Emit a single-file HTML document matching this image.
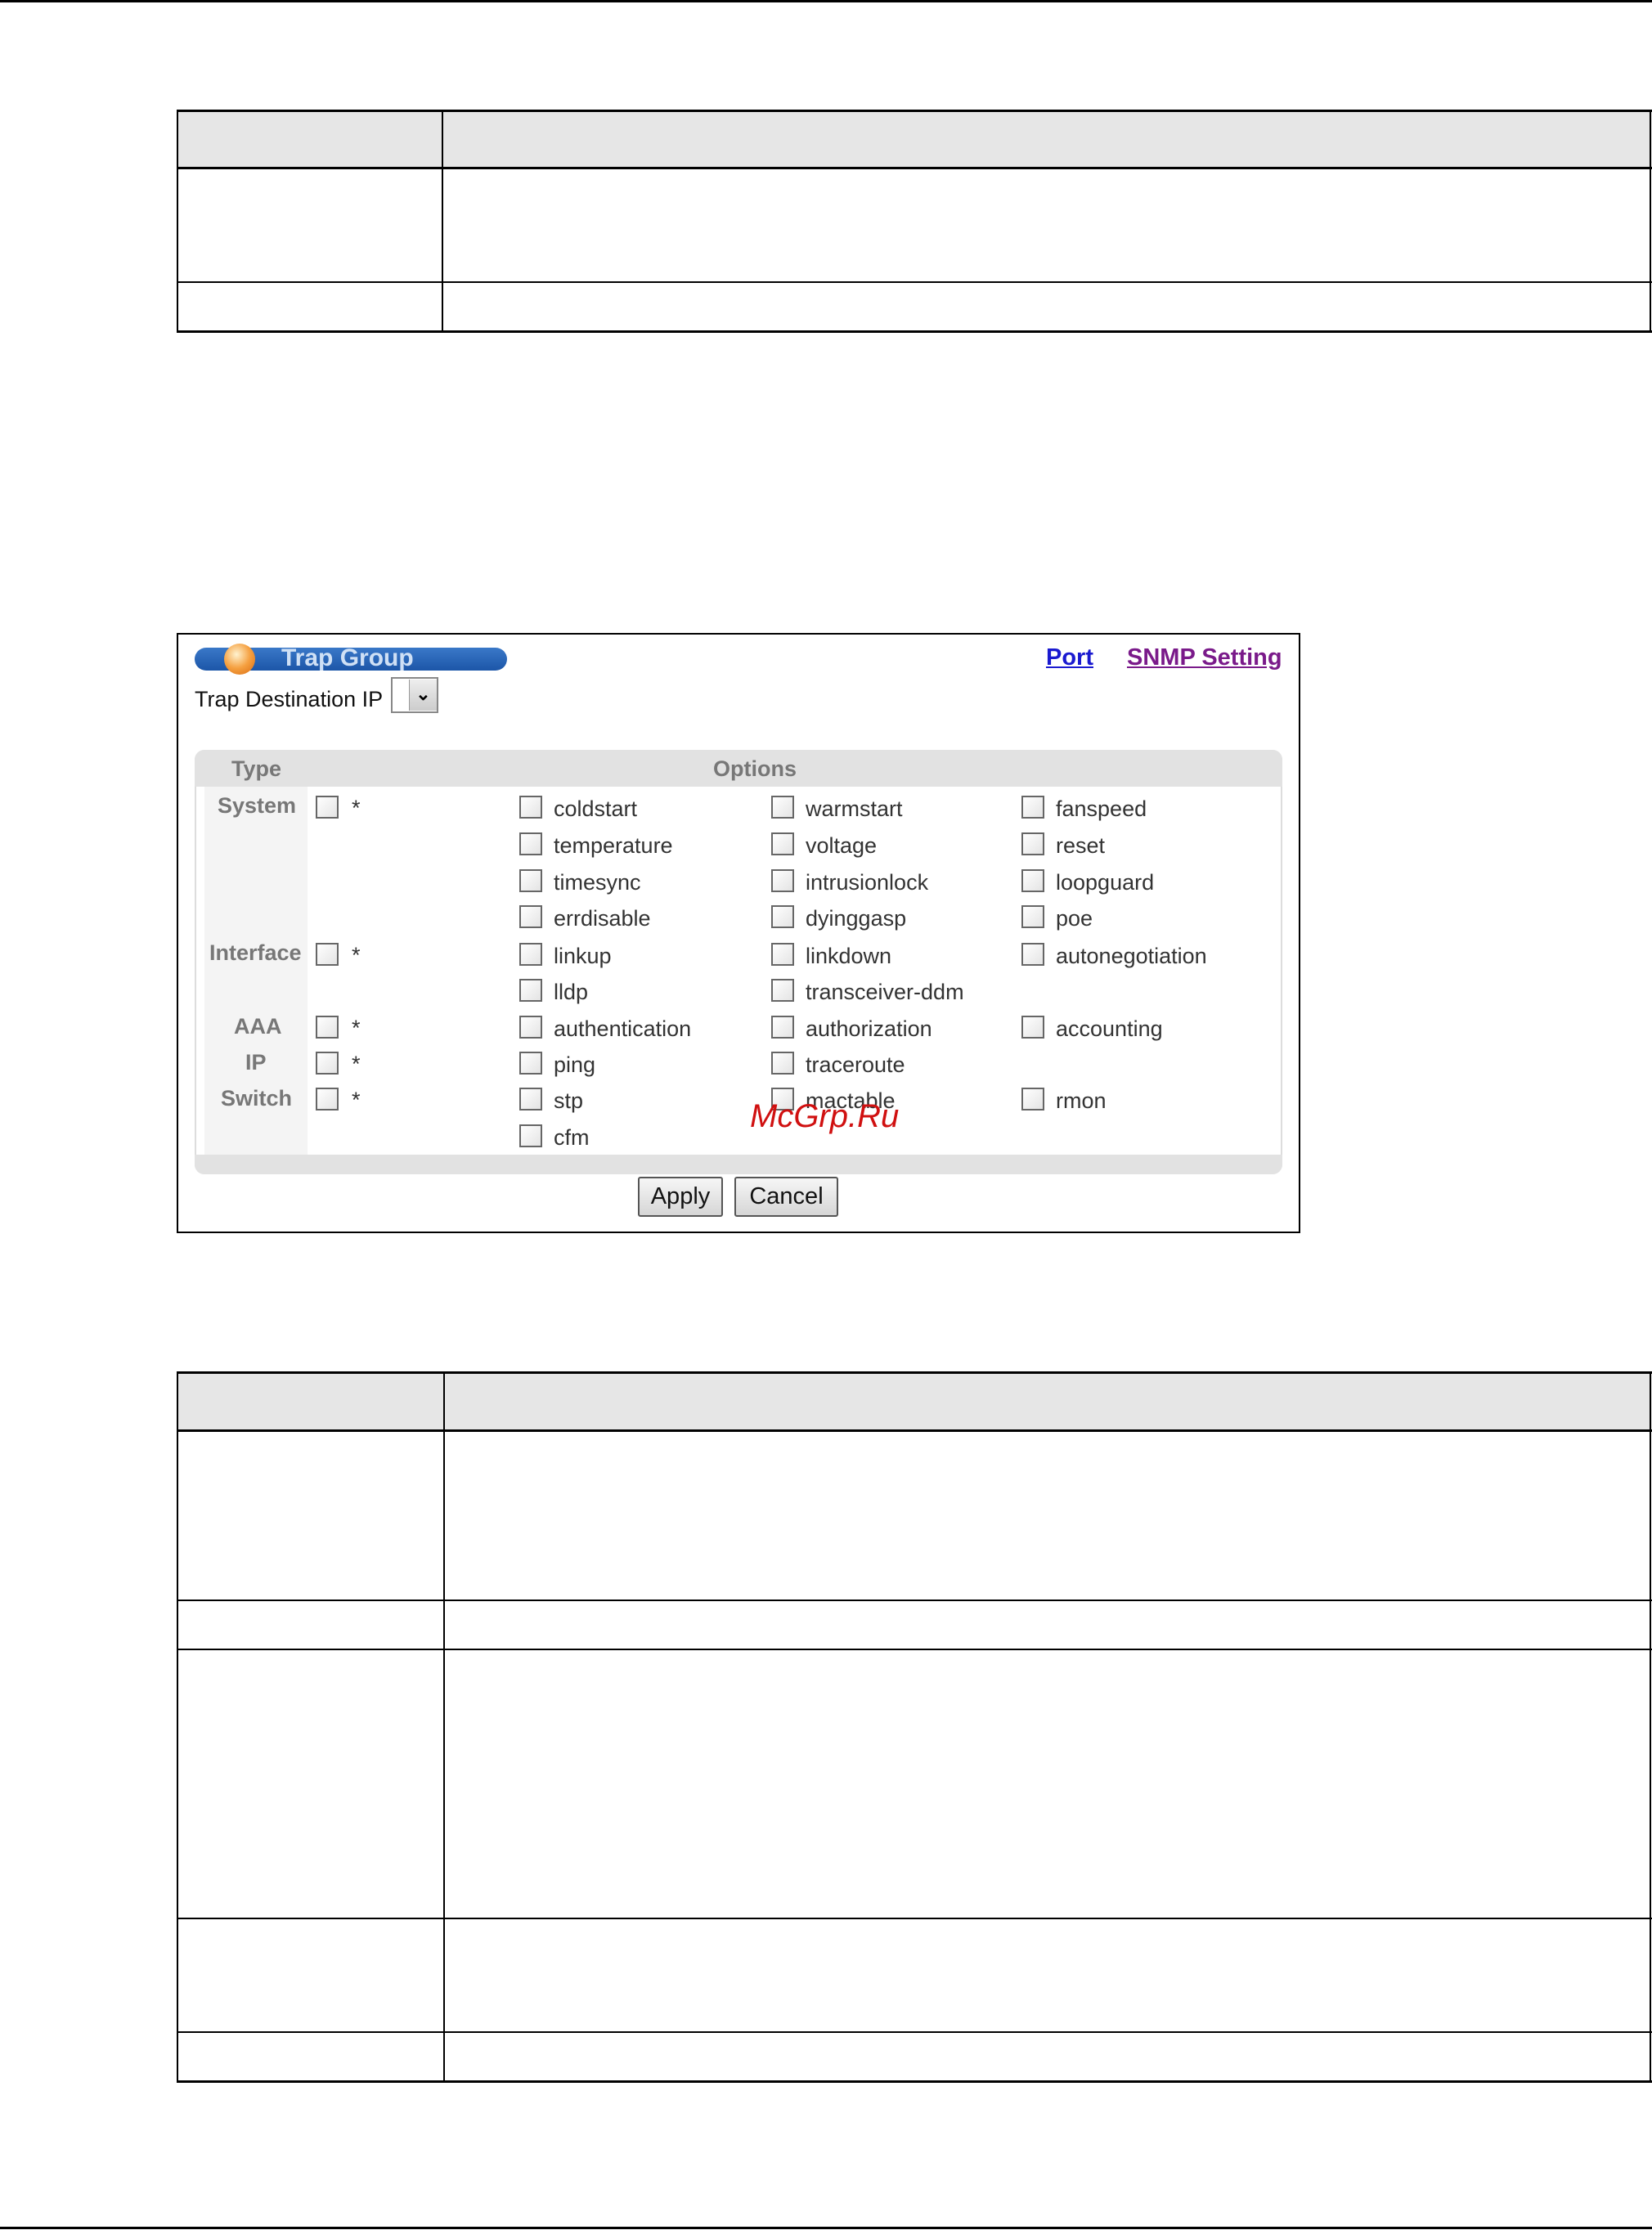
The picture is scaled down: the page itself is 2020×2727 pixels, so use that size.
<!DOCTYPE html>
<html><head><meta charset="utf-8"><style>
*{margin:0;padding:0;box-sizing:border-box}
body{width:2020px;height:2727px;background:#fff;position:relative;overflow:hidden;font-family:"Liberation Sans",Arial,sans-serif}
.a{position:absolute}
.hl{position:absolute;background:#000}
.t{position:absolute;font-size:27px;color:#333;white-space:nowrap;line-height:30px}
.cb{position:absolute;width:28px;height:28px;border:2px solid #666;background:linear-gradient(135deg,#fff,#e4e4e4)}
.btn{position:absolute;border:2px solid #555;background:linear-gradient(#f6f6f6,#d6d6d6);font-size:29px;color:#111;text-align:center;line-height:44px;border-radius:3px}
</style></head><body>
<div class="hl" style="left:0;top:0;width:2020px;height:3px"></div>
<div class="hl" style="left:0;top:2723px;width:2020px;height:3px"></div>

<!-- table 1 -->
<div class="a" style="left:216px;top:134px;width:1804px;height:71px;background:#e6e6e6"></div>
<div class="hl" style="left:216px;top:134px;width:1804px;height:3px"></div>
<div class="hl" style="left:216px;top:204px;width:1804px;height:3px"></div>
<div class="hl" style="left:216px;top:344px;width:1804px;height:2px"></div>
<div class="hl" style="left:216px;top:404px;width:1804px;height:3px"></div>
<div class="hl" style="left:216px;top:134px;width:2px;height:273px"></div>
<div class="hl" style="left:540px;top:134px;width:2px;height:273px"></div>
<div class="hl" style="left:2017px;top:134px;width:2px;height:273px"></div>

<!-- panel -->
<div class="a" style="left:216px;top:774px;width:1374px;height:734px;border:2px solid #000"></div>
<div class="a" style="left:238px;top:792px;width:382px;height:28px;border-radius:14px;background:linear-gradient(#3a78c8,#1c56a8)"></div>
<div class="a" style="left:274px;top:787px;width:38px;height:38px;border-radius:50%;background:radial-gradient(circle at 40% 35%,#fff3d0,#f5a040 50%,#d86a10)"></div>
<div class="a" style="left:344px;top:788px;font-size:30px;color:#cfe0f5;font-weight:bold;line-height:34px">Trap Group</div>
<div class="a" style="left:1279px;top:788px;font-size:29px;color:#1a1ad0;font-weight:bold;text-decoration:underline">Port</div>
<div class="a" style="left:1378px;top:788px;font-size:29px;color:#7a1a8a;font-weight:bold;text-decoration:underline">SNMP Setting</div>
<div class="t" style="left:238px;top:840px;color:#111">Trap Destination IP</div>
<div class="a" style="left:478px;top:828px;width:58px;height:44px;border:2px solid #888;background:#fff"></div>
<div class="a" style="left:500px;top:831px;width:34px;height:38px;background:linear-gradient(#eee,#ccc);border-left:1px solid #999;font-size:22px;text-align:center;line-height:36px;font-weight:bold">&#8964;</div>

<div class="a" style="left:238px;top:917px;width:1330px;height:519px;background:#fff;border-radius:12px;box-shadow:0 0 0 2px #ddd inset"></div>
<div class="a" style="left:238px;top:917px;width:1330px;height:45px;background:#e2e2e2;border-radius:12px 12px 0 0"></div>
<div class="a" style="left:238px;top:1412px;width:1330px;height:24px;background:#e2e2e2;border-radius:0 0 12px 12px"></div>
<div class="a" style="left:250px;top:962px;width:126px;height:450px;background:#f4f4f4"></div>
<div class="t" style="left:283px;top:925px;color:#777;font-weight:bold">Type</div>
<div class="t" style="left:872px;top:925px;color:#777;font-weight:bold">Options</div>

<div class="t" style="left:266px;top:970px;color:#777;font-weight:bold">System</div>
<div class="t" style="left:256px;top:1150px;color:#777;font-weight:bold">Interface</div>
<div class="t" style="left:286px;top:1240px;color:#777;font-weight:bold">AAA</div>
<div class="t" style="left:300px;top:1284px;color:#777;font-weight:bold">IP</div>
<div class="t" style="left:270px;top:1328px;color:#777;font-weight:bold">Switch</div>
<div class="cb" style="left:386px;top:973px"></div><div class="t" style="left:430px;top:973px">*</div>
<div class="cb" style="left:386px;top:1153px"></div><div class="t" style="left:430px;top:1153px">*</div>
<div class="cb" style="left:386px;top:1242px"></div><div class="t" style="left:430px;top:1242px">*</div>
<div class="cb" style="left:386px;top:1286px"></div><div class="t" style="left:430px;top:1286px">*</div>
<div class="cb" style="left:386px;top:1330px"></div><div class="t" style="left:430px;top:1330px">*</div>

<div class="cb" style="left:635px;top:973px"></div><div class="t" style="left:677px;top:974px">coldstart</div>
<div class="cb" style="left:943px;top:973px"></div><div class="t" style="left:985px;top:974px">warmstart</div>
<div class="cb" style="left:1249px;top:973px"></div><div class="t" style="left:1291px;top:974px">fanspeed</div>
<div class="cb" style="left:635px;top:1018px"></div><div class="t" style="left:677px;top:1019px">temperature</div>
<div class="cb" style="left:943px;top:1018px"></div><div class="t" style="left:985px;top:1019px">voltage</div>
<div class="cb" style="left:1249px;top:1018px"></div><div class="t" style="left:1291px;top:1019px">reset</div>
<div class="cb" style="left:635px;top:1063px"></div><div class="t" style="left:677px;top:1064px">timesync</div>
<div class="cb" style="left:943px;top:1063px"></div><div class="t" style="left:985px;top:1064px">intrusionlock</div>
<div class="cb" style="left:1249px;top:1063px"></div><div class="t" style="left:1291px;top:1064px">loopguard</div>
<div class="cb" style="left:635px;top:1107px"></div><div class="t" style="left:677px;top:1108px">errdisable</div>
<div class="cb" style="left:943px;top:1107px"></div><div class="t" style="left:985px;top:1108px">dyinggasp</div>
<div class="cb" style="left:1249px;top:1107px"></div><div class="t" style="left:1291px;top:1108px">poe</div>
<div class="cb" style="left:635px;top:1153px"></div><div class="t" style="left:677px;top:1154px">linkup</div>
<div class="cb" style="left:943px;top:1153px"></div><div class="t" style="left:985px;top:1154px">linkdown</div>
<div class="cb" style="left:1249px;top:1153px"></div><div class="t" style="left:1291px;top:1154px">autonegotiation</div>
<div class="cb" style="left:635px;top:1197px"></div><div class="t" style="left:677px;top:1198px">lldp</div>
<div class="cb" style="left:943px;top:1197px"></div><div class="t" style="left:985px;top:1198px">transceiver-ddm</div>
<div class="cb" style="left:635px;top:1242px"></div><div class="t" style="left:677px;top:1243px">authentication</div>
<div class="cb" style="left:943px;top:1242px"></div><div class="t" style="left:985px;top:1243px">authorization</div>
<div class="cb" style="left:1249px;top:1242px"></div><div class="t" style="left:1291px;top:1243px">accounting</div>
<div class="cb" style="left:635px;top:1286px"></div><div class="t" style="left:677px;top:1287px">ping</div>
<div class="cb" style="left:943px;top:1286px"></div><div class="t" style="left:985px;top:1287px">traceroute</div>
<div class="cb" style="left:635px;top:1330px"></div><div class="t" style="left:677px;top:1331px">stp</div>
<div class="cb" style="left:943px;top:1330px"></div><div class="t" style="left:985px;top:1331px">mactable</div>
<div class="cb" style="left:1249px;top:1330px"></div><div class="t" style="left:1291px;top:1331px">rmon</div>
<div class="cb" style="left:635px;top:1375px"></div><div class="t" style="left:677px;top:1376px">cfm</div>
<div class="a" style="left:917px;top:1343px;font-size:40px;color:#d01010;font-style:italic;white-space:nowrap">McGrp.Ru</div>

<div class="btn" style="left:780px;top:1439px;width:104px;height:49px">Apply</div>
<div class="btn" style="left:898px;top:1439px;width:127px;height:49px">Cancel</div>

<!-- table 2 -->
<div class="a" style="left:216px;top:1677px;width:1804px;height:72px;background:#e6e6e6"></div>
<div class="hl" style="left:216px;top:1677px;width:1804px;height:3px"></div>
<div class="hl" style="left:216px;top:1748px;width:1804px;height:3px"></div>
<div class="hl" style="left:216px;top:1956px;width:1804px;height:2px"></div>
<div class="hl" style="left:216px;top:2016px;width:1804px;height:2px"></div>
<div class="hl" style="left:216px;top:2345px;width:1804px;height:2px"></div>
<div class="hl" style="left:216px;top:2484px;width:1804px;height:2px"></div>
<div class="hl" style="left:216px;top:2544px;width:1804px;height:3px"></div>
<div class="hl" style="left:216px;top:1677px;width:2px;height:870px"></div>
<div class="hl" style="left:542px;top:1677px;width:2px;height:870px"></div>
<div class="hl" style="left:2017px;top:1677px;width:2px;height:870px"></div>
</body></html>
